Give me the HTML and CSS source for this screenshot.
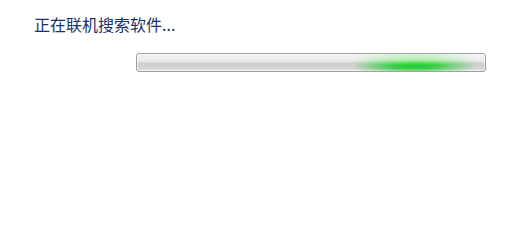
FILE: index.html
```html
<!DOCTYPE html>
<html lang="zh-CN">
<head>
<meta charset="utf-8">
<link rel="stylesheet" href="styles.css">
</head>
<body>
<div class="page">
  <div class="status">正在联机搜索软件...</div>
  <div class="bar-row">
    <div class="bar">
      <div class="glow"></div>
    </div>
  </div>
</div>
</body>
</html>
```
FILE: styles.css
```css
html, body {
  margin: 0;
  padding: 0;
  background: #ffffff;
}
.page {
  width: 516px;
  height: 242px;
  padding: 14px 0 0 34px;
  box-sizing: border-box;
  display: flex;
  flex-direction: column;
}
.status {
  font-family: "Noto Sans CJK SC", "Microsoft YaHei", sans-serif;
  font-size: 16px;
  line-height: 20px;
  color: #1a3066;
  letter-spacing: 0;
}
.bar-row {
  margin-top: 19px;
  padding-left: 102px;
}
.bar {
  position: relative;
  width: 350px;
  height: 19px;
  box-sizing: border-box;
  border: 1px solid #a0a0a0;
  border-radius: 3px;
  overflow: hidden;
  background: linear-gradient(to bottom,
    #f2f2f2 0%, #f0f0f0 25%, #e6e6e6 45%, #cfcfcf 55%, #d3d3d3 80%, #e2e2e2 100%);
  box-shadow: inset 0 0 0 1px rgba(255,255,255,0.6);
}
.glow {
  position: absolute;
  left: 214px;
  top: 0;
  width: 126px;
  height: 100%;
  background: linear-gradient(to bottom,
    #c8f2c8 0%, #b4eeb4 30%, #5fe05f 50%, #10cc20 65%, #14c824 85%, #6bd86b 100%);
  -webkit-mask-image: radial-gradient(ellipse 50% 120% at 50% 50%, #000 0%, rgba(0,0,0,0.75) 40%, rgba(0,0,0,0) 100%);
  mask-image: radial-gradient(ellipse 50% 120% at 50% 50%, #000 0%, rgba(0,0,0,0.75) 40%, rgba(0,0,0,0) 100%);
}
```
